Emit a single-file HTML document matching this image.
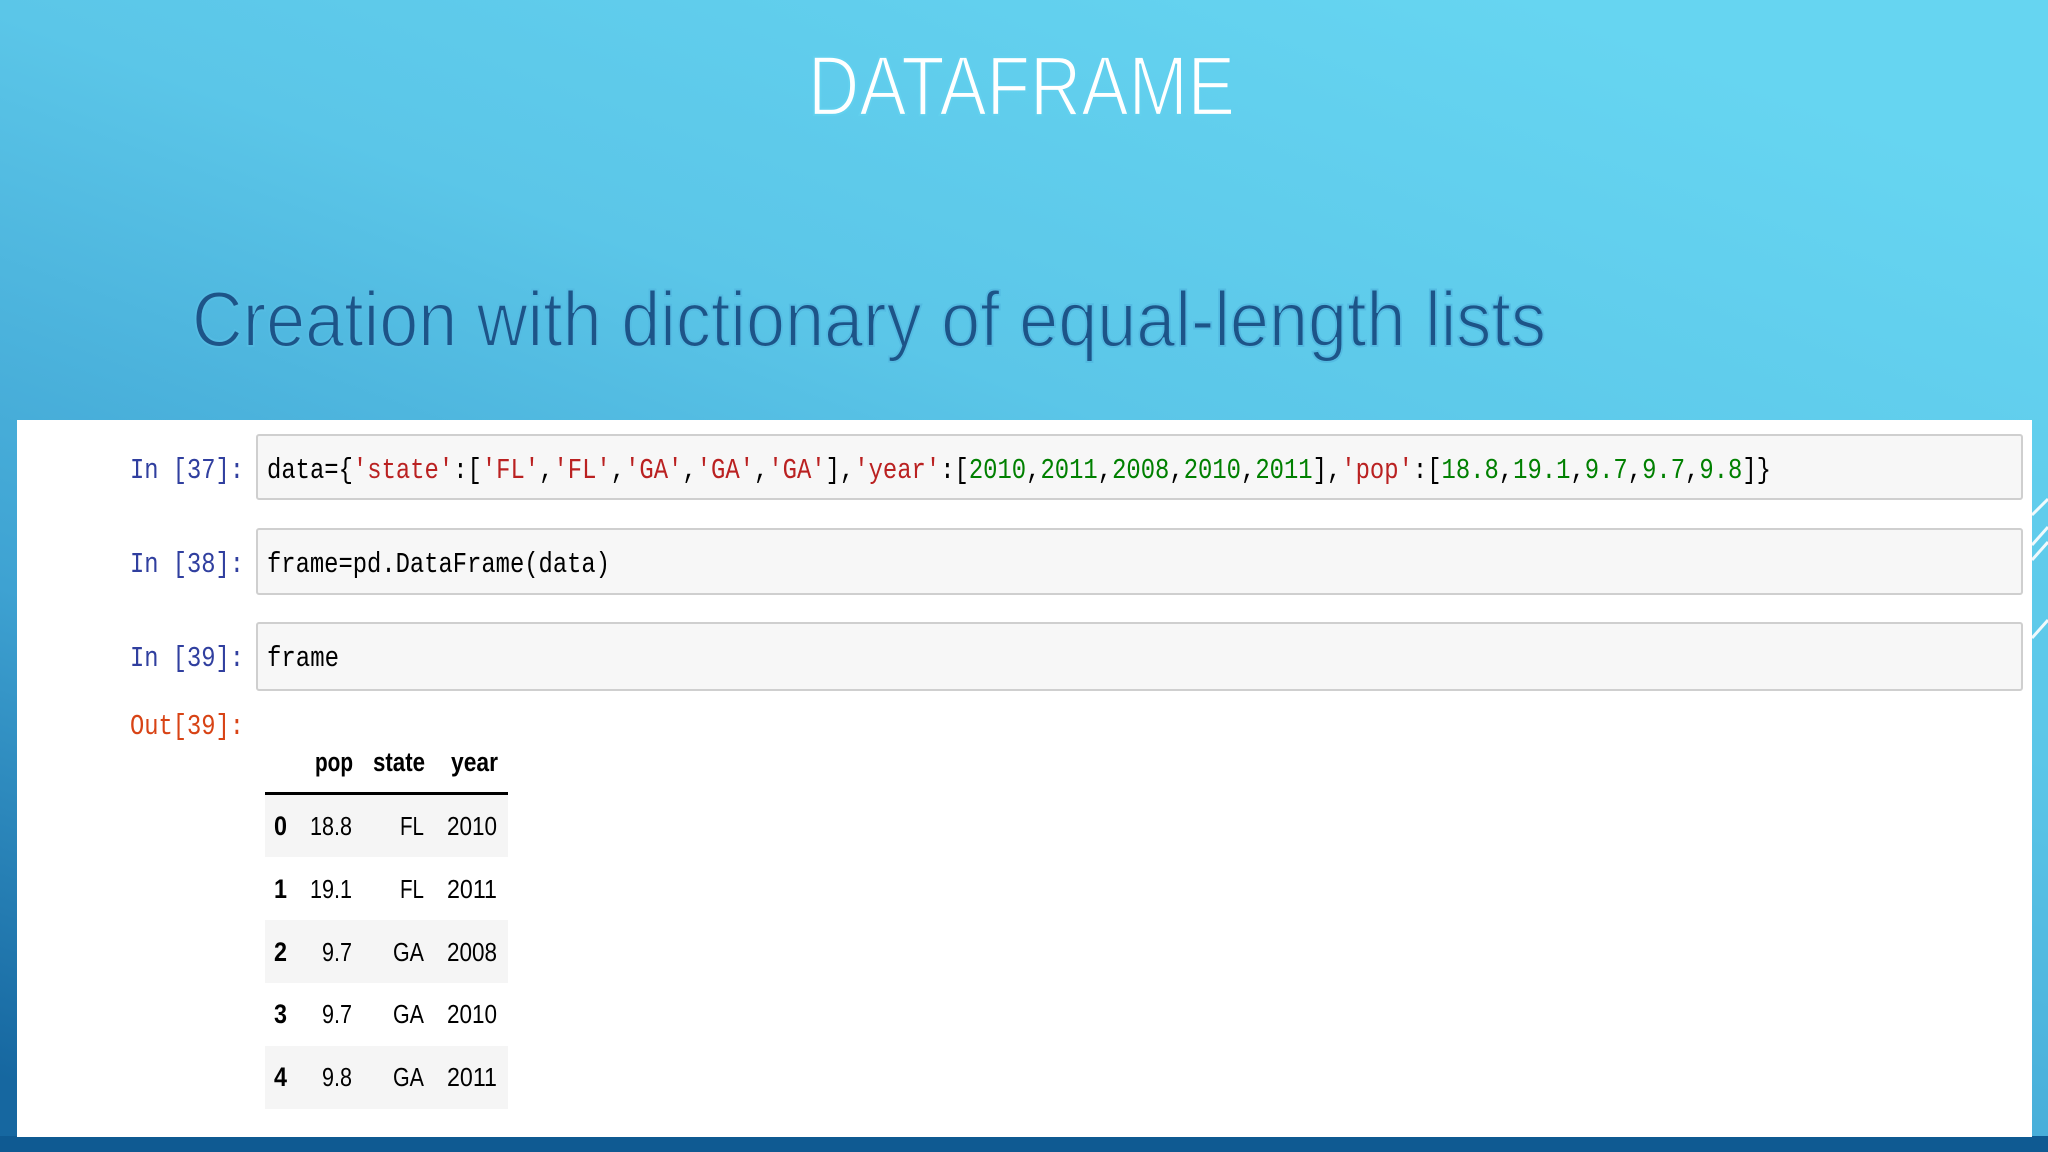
<!DOCTYPE html>
<html><head><meta charset="utf-8"><style>
html,body{margin:0;padding:0;width:2048px;height:1152px;overflow:hidden}
svg{display:block}
</style></head><body>
<svg width="2048" height="1152" viewBox="0 0 2048 1152" xmlns="http://www.w3.org/2000/svg">
<defs>
<linearGradient id="bg" x1="0.75" y1="0" x2="0.1" y2="1">
<stop offset="0" stop-color="#66d5f1"/>
<stop offset="0.35" stop-color="#5bc6e8"/>
<stop offset="0.7" stop-color="#3ea2d2"/>
<stop offset="1" stop-color="#1667a0"/>
</linearGradient>
</defs>
<rect width="2048" height="1152" fill="url(#bg)"/>
<rect x="0" y="1136" width="2048" height="16" fill="#0f5a92"/>
<g stroke="#ffffff" stroke-width="3" opacity="0.9">
<line x1="2032" y1="515" x2="2048" y2="499"/>
<line x1="2032" y1="545" x2="2048" y2="527"/>
<line x1="2032" y1="560" x2="2048" y2="542"/>
<line x1="2032" y1="638" x2="2048" y2="620"/>
</g>
<rect x="17" y="420" width="2015" height="717" fill="#ffffff"/>

<g font-family="Liberation Sans, sans-serif">
<text x="808" y="115" font-size="84" fill="#ffffff" stroke="#62d0ee" stroke-width="2.2" textLength="427" lengthAdjust="spacingAndGlyphs">DATAFRAME</text>
<text x="192" y="346" font-size="78" fill="#1d5488" stroke="#54bbe2" stroke-width="2" textLength="1354" lengthAdjust="spacingAndGlyphs">Creation with dictionary of equal-length lists</text>
</g>

<g fill="#f7f7f7" stroke="#cfcfcf" stroke-width="2">
<rect x="257" y="435" width="1765" height="64" rx="2"/>
<rect x="257" y="529" width="1765" height="65" rx="2"/>
<rect x="257" y="623" width="1765" height="67" rx="2"/>
</g>

<g font-family="Liberation Mono, monospace" font-size="29">
<text x="130" y="478" fill="#303f9f" textLength="114" lengthAdjust="spacingAndGlyphs">In [37]:</text>
<text x="130" y="572" fill="#303f9f" textLength="114" lengthAdjust="spacingAndGlyphs">In [38]:</text>
<text x="130" y="666" fill="#303f9f" textLength="114" lengthAdjust="spacingAndGlyphs">In [39]:</text>
<text x="130" y="734" fill="#d84315" textLength="114" lengthAdjust="spacingAndGlyphs">Out[39]:</text>
<text x="267" y="478" textLength="1504" lengthAdjust="spacingAndGlyphs" fill="#000">data={<tspan fill="#ba2121">'state'</tspan>:[<tspan fill="#ba2121">'FL'</tspan>,<tspan fill="#ba2121">'FL'</tspan>,<tspan fill="#ba2121">'GA'</tspan>,<tspan fill="#ba2121">'GA'</tspan>,<tspan fill="#ba2121">'GA'</tspan>],<tspan fill="#ba2121">'year'</tspan>:[<tspan fill="#008000">2010</tspan>,<tspan fill="#008000">2011</tspan>,<tspan fill="#008000">2008</tspan>,<tspan fill="#008000">2010</tspan>,<tspan fill="#008000">2011</tspan>],<tspan fill="#ba2121">'pop'</tspan>:[<tspan fill="#008000">18.8</tspan>,<tspan fill="#008000">19.1</tspan>,<tspan fill="#008000">9.7</tspan>,<tspan fill="#008000">9.7</tspan>,<tspan fill="#008000">9.8</tspan>]}</text>
<text x="267" y="572" fill="#000" textLength="343" lengthAdjust="spacingAndGlyphs">frame=pd.DataFrame(data)</text>
<text x="267" y="666" fill="#000" textLength="72" lengthAdjust="spacingAndGlyphs">frame</text>
</g>

<g fill="#f5f5f5">
<rect x="265" y="794" width="243" height="63"/>
<rect x="265" y="920" width="243" height="63"/>
<rect x="265" y="1046" width="243" height="63"/>
</g>
<rect x="265" y="792" width="243" height="3" fill="#000"/>
<g font-family="Liberation Sans, sans-serif" font-size="27" fill="#000">
<g font-weight="bold" text-anchor="end">
<text x="353" y="771" textLength="38" lengthAdjust="spacingAndGlyphs">pop</text>
<text x="425" y="771" textLength="52" lengthAdjust="spacingAndGlyphs">state</text>
<text x="498" y="771" textLength="47" lengthAdjust="spacingAndGlyphs">year</text>
<text x="287" y="835" textLength="13" lengthAdjust="spacingAndGlyphs">0</text>
<text x="287" y="898" textLength="13" lengthAdjust="spacingAndGlyphs">1</text>
<text x="287" y="961" textLength="13" lengthAdjust="spacingAndGlyphs">2</text>
<text x="287" y="1023" textLength="13" lengthAdjust="spacingAndGlyphs">3</text>
<text x="287" y="1086" textLength="13" lengthAdjust="spacingAndGlyphs">4</text>
</g>
<g text-anchor="end" font-size="26">
<text x="352" y="835" textLength="42" lengthAdjust="spacingAndGlyphs">18.8</text>
<text x="424" y="835" textLength="24" lengthAdjust="spacingAndGlyphs">FL</text>
<text x="497" y="835" textLength="50" lengthAdjust="spacingAndGlyphs">2010</text>
<text x="352" y="898" textLength="42" lengthAdjust="spacingAndGlyphs">19.1</text>
<text x="424" y="898" textLength="24" lengthAdjust="spacingAndGlyphs">FL</text>
<text x="497" y="898" textLength="50" lengthAdjust="spacingAndGlyphs">2011</text>
<text x="352" y="961" textLength="30" lengthAdjust="spacingAndGlyphs">9.7</text>
<text x="424" y="961" textLength="31" lengthAdjust="spacingAndGlyphs">GA</text>
<text x="497" y="961" textLength="50" lengthAdjust="spacingAndGlyphs">2008</text>
<text x="352" y="1023" textLength="30" lengthAdjust="spacingAndGlyphs">9.7</text>
<text x="424" y="1023" textLength="31" lengthAdjust="spacingAndGlyphs">GA</text>
<text x="497" y="1023" textLength="50" lengthAdjust="spacingAndGlyphs">2010</text>
<text x="352" y="1086" textLength="30" lengthAdjust="spacingAndGlyphs">9.8</text>
<text x="424" y="1086" textLength="31" lengthAdjust="spacingAndGlyphs">GA</text>
<text x="497" y="1086" textLength="50" lengthAdjust="spacingAndGlyphs">2011</text>
</g>
</g>
</svg>
</body></html>
